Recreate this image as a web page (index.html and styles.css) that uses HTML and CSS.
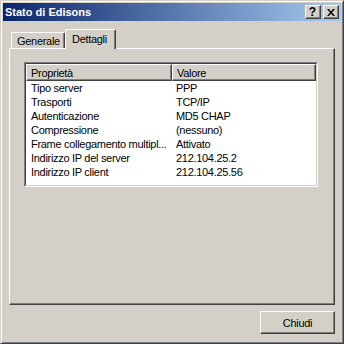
FILE: index.html
```html
<!DOCTYPE html>
<html lang="it">
<head>
    <meta charset="UTF-8">
    <title>Stato di Edisons</title>
    <link rel="stylesheet" href="styles.css">
</head>
<body>
    <div class="window">
        <div class="titlebar">
            <span class="title">Stato di Edisons</span>
            <div class="caption-buttons">
                <div class="cap-btn help">?</div>
                <div class="cap-btn">
                    <svg width="8" height="7" viewBox="0 0 8 7">
                        <path d="M0 0 H2 L4 2.4 L6 0 H8 L5 3.5 L8 7 H6 L4 4.6 L2 7 H0 L3 3.5 Z" fill="#000"/>
                    </svg>
                </div>
            </div>
        </div>

        <div class="content">
            <div class="tabs">
                <div class="tab">Generale</div>
                <div class="tab active">Dettagli</div>
            </div>

            <div class="panel">
                <div class="listview">
                    <div class="lv-inner">
                        <div class="lv-header">
                            <div class="lv-head-cell">Proprietà</div>
                            <div class="lv-head-cell">Valore</div>
                        </div>
                        <div class="lv-row"><span>Tipo server</span><span>PPP</span></div>
                        <div class="lv-row"><span>Trasporti</span><span>TCP/IP</span></div>
                        <div class="lv-row"><span>Autenticazione</span><span>MD5 CHAP</span></div>
                        <div class="lv-row"><span>Compressione</span><span>(nessuno)</span></div>
                        <div class="lv-row"><span>Frame collegamento multipl...</span><span>Attivato</span></div>
                        <div class="lv-row"><span>Indirizzo IP del server</span><span>212.104.25.2</span></div>
                        <div class="lv-row"><span>Indirizzo IP client</span><span>212.104.25.56</span></div>
                    </div>
                </div>
            </div>

            <div class="footer">
                <div class="btn">Chiudi</div>
            </div>
        </div>
    </div>
</body>
</html>
```

FILE: styles.css
```css
* {
    margin: 0;
    padding: 0;
    box-sizing: border-box;
}

body {
    background: #d4d0c8;
    font-family: "Liberation Sans", Arial, sans-serif;
    font-size: 11px;
    letter-spacing: -0.3px;
    color: #000;
}

.window {
    width: 344px;
    height: 344px;
    border: 1px solid;
    border-color: #d4d0c8 #404040 #404040 #d4d0c8;
    box-shadow: inset 1px 1px #fff, inset -1px -1px #808080;
    padding: 2px;
    display: flex;
    flex-direction: column;
}

.titlebar {
    height: 18px;
    background: linear-gradient(to right, #0a246a, #a6caf0);
    display: flex;
    align-items: center;
    justify-content: space-between;
    padding: 0 2px;
}

.title {
    color: #fff;
    font-weight: bold;
    letter-spacing: 0;
}

.caption-buttons {
    display: flex;
    gap: 2px;
}

.cap-btn {
    width: 16px;
    height: 14px;
    background: #d4d0c8;
    border: 1px solid;
    border-color: #fff #404040 #404040 #fff;
    box-shadow: inset -1px -1px #808080;
    display: flex;
    align-items: center;
    justify-content: center;
}

.cap-btn.help {
    font-weight: bold;
    font-size: 12px;
    letter-spacing: 0;
    line-height: 12px;
    padding-right: 1px;
}

.content {
    flex: 1;
    padding: 8px 6px 0;
    display: flex;
    flex-direction: column;
}

.tabs {
    height: 19px;
    display: flex;
    align-items: flex-end;
    padding-left: 2px;
    position: relative;
    z-index: 1;
}

.tab {
    height: 16px;
    background: #d4d0c8;
    border: 1px solid;
    border-bottom: none;
    border-color: #fff #404040 #404040 #fff;
    border-radius: 2px 2px 0 0;
    box-shadow: inset -1px 0 #808080;
    display: flex;
    align-items: center;
    padding: 0 5px;
}

.tab:first-child {
    width: 54px;
}

.tab.active {
    width: 51px;
    height: 20px;
    margin-bottom: -1px;
    padding: 0 0 2px 6px;
}

.panel {
    height: 257px;
    border: 1px solid;
    border-color: #fff #404040 #404040 #fff;
    box-shadow: inset -1px -1px #808080;
    padding: 13px 0 0 14px;
}

.listview {
    width: 294px;
    height: 125px;
    border: 1px solid;
    border-color: #808080 #fff #fff #808080;
}

.lv-inner {
    height: 100%;
    border: 1px solid;
    border-color: #404040 #d4d0c8 #d4d0c8 #404040;
    background: #fff;
}

.lv-header {
    display: grid;
    grid-template-columns: 146px 1fr;
    height: 17px;
}

.lv-head-cell {
    background: #d4d0c8;
    border: 1px solid;
    border-color: #fff #404040 #404040 #fff;
    box-shadow: inset -1px -1px #808080;
    display: flex;
    align-items: center;
    padding-left: 4px;
}

.lv-row {
    display: grid;
    grid-template-columns: 146px 1fr;
    height: 14px;
    line-height: 14px;
}

.lv-row span:first-child {
    padding-left: 5px;
}

.lv-row span:last-child {
    padding-left: 4px;
}

.footer {
    display: flex;
    justify-content: flex-end;
    padding-top: 6px;
}

.btn {
    width: 75px;
    height: 23px;
    background: #d4d0c8;
    border: 1px solid;
    border-color: #fff #404040 #404040 #fff;
    box-shadow: inset -1px -1px #808080;
    display: flex;
    align-items: center;
    justify-content: center;
}
```
